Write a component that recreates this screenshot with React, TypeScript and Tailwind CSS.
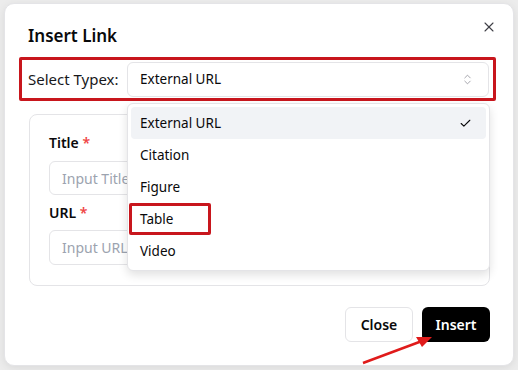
import { X, ChevronsUpDown, Check } from "lucide-react";

const options = ["External URL", "Citation", "Figure", "Table", "Video"];

export default function App() {
  return (
    <div
      className="relative w-[518px] h-[370px] bg-[#ececec] pt-[3px] pl-[4px] overflow-hidden"
      style={{ fontFamily: '"Noto Sans", "Open Sans", sans-serif' }}
    >
      {/* Dialog */}
      <div className="relative w-[510px] h-[363px] bg-white rounded-[10px] border border-[#e4e4e7] shadow-[0_2px_8px_rgba(0,0,0,0.08)] flex flex-col">
        <button className="absolute right-[16px] top-[15px] text-[#3f3f46]">
          <X size={16} strokeWidth={1.6} />
        </button>

        <h2 className="ml-[23px] mt-[20px] text-[17px] leading-[24px] font-semibold text-[#09090b]">
          Insert Link
        </h2>

        {/* Select row (annotated) */}
        <div className="ml-[14px] mt-[9px] w-[477px] h-[44px] border-[3px] border-[#c8161d] rounded-[2px] flex items-center pl-[6px] pr-[4px]">
          <span className="text-[15px] text-[#18181b] w-[99px] shrink-0">Select Typex:</span>
          <div className="flex-1 h-[35px] border border-[#e4e4e7] rounded-[6px] flex items-center justify-between pl-[12px] pr-[14px] bg-white">
            <span className="text-[13.5px] text-[#09090b]">External URL</span>
            <ChevronsUpDown size={13} strokeWidth={1.4} className="text-[#8a8a93]" />
          </div>
        </div>

        {/* Card */}
        <div className="ml-[24px] mt-[13px] w-[461px] h-[172px] border border-[#e4e4e7] rounded-[8px] px-[19px] pt-[18px]">
          <label className="block text-[14px] leading-[20px] font-semibold text-[#09090b]">
            Title <span className="text-[#ef4444]">*</span>
          </label>
          <div className="mt-[8px] h-[34px] border border-[#e4e4e7] rounded-[6px] flex items-center px-[12px] text-[14px] text-[#9ca3af]">
            Input Title...
          </div>
          <label className="block mt-[8px] text-[14px] leading-[20px] font-semibold text-[#09090b]">
            URL <span className="text-[#ef4444]">*</span>
          </label>
          <div className="mt-[7px] h-[35px] border border-[#e4e4e7] rounded-[6px] flex items-center px-[12px] text-[14px] text-[#9ca3af]">
            Input URL...
          </div>
        </div>

        {/* Footer */}
        <div className="mt-auto mb-[23px] mr-[23px] flex justify-end gap-[9px]">
          <button className="w-[68px] h-[35px] border border-[#e4e4e7] rounded-[6px] bg-white text-[14px] font-semibold text-[#09090b]">
            Close
          </button>
          <button className="w-[68px] h-[35px] rounded-[6px] bg-black text-[14px] font-semibold text-white">
            Insert
          </button>
        </div>

        {/* Dropdown overlay */}
        <div className="absolute left-[122px] top-[99px] w-[363px] h-[168px] bg-white border border-[#e4e4e7] rounded-[6px] shadow-[0_4px_10px_rgba(0,0,0,0.12)] p-[3px]">
          {options.map((o, i) => (
            <div
              key={o}
              className={
                "relative h-[32px] flex items-center justify-between pl-[9px] pr-[14px] rounded-[4px] text-[13.5px] text-[#09090b] " +
                (i === 0 ? "bg-[#f1f3f6]" : "")
              }
            >
              <span>{o}</span>
              {i === 0 && <Check size={13} strokeWidth={2} />}
              {o === "Table" && (
                <div className="absolute left-[-2px] top-[0px] w-[82px] h-[32px] border-[3px] border-[#c8161d] rounded-[2px]" />
              )}
            </div>
          ))}
        </div>
      </div>

      {/* Red arrow annotation */}
      <svg className="absolute left-0 top-0" width="518" height="370">
        <line x1="363" y1="363" x2="422" y2="341" stroke="#e01b1b" strokeWidth="2.5" />
        <polygon points="432,337 416,337 422,347" fill="#e01b1b" />
      </svg>
    </div>
  );
}
